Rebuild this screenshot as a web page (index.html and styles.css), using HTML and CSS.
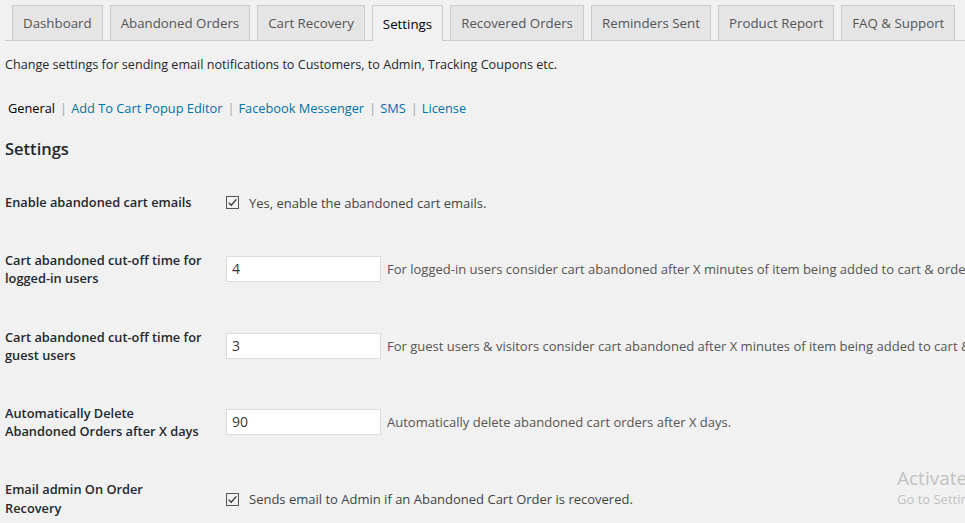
FILE: index.html
```html
<!DOCTYPE html>
<html>
<head>
<meta charset="utf-8">
<link rel="stylesheet" href="styles.css">
</head>
<body>
<div class="wrap">
  <nav class="tabs">
    <a class="tab">Dashboard</a>
    <a class="tab">Abandoned Orders</a>
    <a class="tab">Cart Recovery</a>
    <a class="tab active">Settings</a>
    <a class="tab">Recovered Orders</a>
    <a class="tab">Reminders Sent</a>
    <a class="tab">Product Report</a>
    <a class="tab">FAQ &amp; Support</a>
  </nav>
  <p class="intro">Change settings for sending email notifications to Customers, to Admin, Tracking Coupons etc.</p>
  <ul class="subnav">
    <li class="current">General</li>
    <li class="sep">|</li>
    <li><a>Add To Cart Popup Editor</a></li>
    <li class="sep">|</li>
    <li><a>Facebook Messenger</a></li>
    <li class="sep">|</li>
    <li><a>SMS</a></li>
    <li class="sep">|</li>
    <li><a>License</a></li>
  </ul>
  <h2 class="section-title">Settings</h2>
  <table class="form-table">
    <tr>
      <th>Enable abandoned cart emails</th>
      <td><span class="check"><svg viewBox="0 0 13 13" width="13" height="13"><path d="M2.6 6.6 L5.2 9.2 L10.4 3.4" fill="none" stroke="#333" stroke-width="1.3"/></svg></span><span class="desc dark">Yes, enable the abandoned cart emails.</span></td>
    </tr>
    <tr>
      <th>Cart abandoned cut-off time for logged-in users</th>
      <td><span class="input">4</span><span class="desc">For logged-in users consider cart abandoned after X minutes of item being added to cart &amp; order not placed.</span></td>
    </tr>
    <tr>
      <th>Cart abandoned cut-off time for guest users</th>
      <td><span class="input">3</span><span class="desc">For guest users &amp; visitors consider cart abandoned after X minutes of item being added to cart &amp; order not placed.</span></td>
    </tr>
    <tr>
      <th>Automatically Delete Abandoned Orders after X days</th>
      <td><span class="input">90</span><span class="desc">Automatically delete abandoned cart orders after X days.</span></td>
    </tr>
    <tr>
      <th>Email admin On Order Recovery</th>
      <td><span class="check"><svg viewBox="0 0 13 13" width="13" height="13"><path d="M2.6 6.6 L5.2 9.2 L10.4 3.4" fill="none" stroke="#333" stroke-width="1.3"/></svg></span><span class="desc dark">Sends email to Admin if an Abandoned Cart Order is recovered.</span></td>
    </tr>
  </table>
</div>
<div class="watermark">
  <div class="wm-title">Activate Windows</div>
  <div class="wm-sub">Go to Settings to activate Windows.</div>
</div>
</body>
</html>
```
FILE: styles.css
```css
html, body {
  margin: 0;
  padding: 0;
  background: #f1f1f1;
  overflow: hidden;
  width: 965px;
  height: 523px;
}
body {
  font-family: "Open Sans", "Noto Sans", sans-serif;
  font-size: 13px;
  color: #23282d;
  position: relative;
}
.wrap {
  padding: 0 0 0 5px;
}
.tabs {
  display: flex;
  margin-top: 5px;
  border-bottom: 1px solid #ccc;
  height: 35px;
  white-space: nowrap;
}
.tab {
  display: flex;
  align-items: center;
  margin-left: 7px;
  padding: 0 10px;
  height: 34px;
  border: 1px solid #ccc;
  border-bottom: none;
  background: #e5e5e5;
  color: #555;
  font-size: 13.3px;
  font-weight: 500;
}
.tab.active {
  background: #f1f1f1;
  color: #000;
  height: 35px;
  margin-bottom: -1px;
}
.intro {
  margin: 14px 0 0;
  line-height: 19px;
  font-size: 12.6px;
  white-space: nowrap;
}
.subnav {
  list-style: none;
  margin: 25px 0 0 3px;
  padding: 0;
  display: flex;
  line-height: 19px;
  font-size: 12.8px;
}
.subnav .current { color: #000; }
.subnav .sep { color: #a0a5aa; margin: 0 4px 0 5px; }
.subnav a { color: #0073aa; }
.section-title {
  margin: 19px 0 0;
  font-size: 16.5px;
  font-weight: 600;
  line-height: 24px;
  color: #23282d;
}
.form-table {
  border-collapse: collapse;
  margin-top: 12px;
  table-layout: fixed;
  width: 1400px;
}
.form-table th {
  width: 196.5px;
  padding: 20px 14.5px 20px 0;
  text-align: left;
  vertical-align: top;
  font-size: 12.8px;
  font-weight: 600;
  line-height: 18.2px;
  color: #23282d;
}
.form-table td {
  padding: 0 10px;
  vertical-align: middle;
  white-space: nowrap;
  font-size: 13px;
}
.check {
  display: inline-block;
  vertical-align: middle;
  width: 11px;
  height: 11px;
  border: 1px solid #555;
  position: relative;
}
.check svg {
  position: absolute;
  left: -1px;
  top: -1px;
}
.input {
  display: inline-block;
  vertical-align: middle;
  box-sizing: border-box;
  width: 155px;
  height: 26px;
  padding: 0 5px;
  background: #fff;
  border: 1px solid #ddd;
  font-size: 14px;
  line-height: 24px;
  color: #32373c;
}
.desc {
  vertical-align: middle;
  margin-left: 6px;
  color: #555;
}
.desc.dark {
  margin-left: 10px;
  color: #444;
}
.watermark {
  position: absolute;
  left: 897px;
  top: 466px;
  color: #c2c2c2;
  white-space: nowrap;
}
.wm-title {
  font-size: 19px;
  line-height: 24px;
}
.wm-sub {
  font-size: 13px;
  line-height: 18px;
}
```
